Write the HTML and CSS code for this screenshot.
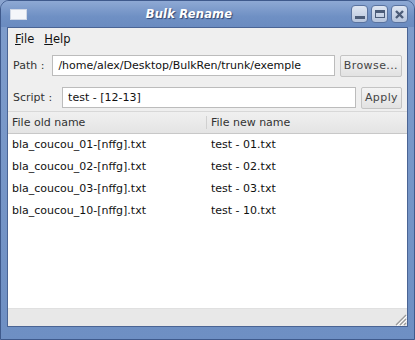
FILE: index.html
```html
<!DOCTYPE html>
<html lang="en">
<head>
    <meta charset="UTF-8">
    <title>Bulk Rename</title>
    <link rel="stylesheet" href="styles.css">
</head>
<body>
    <div class="window">
        <!-- title bar -->
        <div class="titlebar">
            <span class="app-icon"></span>
            <span class="title">Bulk Rename</span>
            <div class="wm-buttons">
                <span class="wm-btn"><span class="ico-min"></span></span>
                <span class="wm-btn"><span class="ico-max"></span></span>
                <span class="wm-btn">
                    <svg width="11" height="11" viewBox="0 0 11 11"><path d="M2 2 L9 9 M9 2 L2 9" stroke="#4c5c78" stroke-width="2.4"/></svg>
                </span>
            </div>
        </div>

        <div class="client">
            <div class="menubar">
                <span class="menu"><u>F</u>ile</span>
                <span class="menu"><u>H</u>elp</span>
            </div>

            <div class="form-row">
                <span class="label">Path :</span>
                <span class="input path-input">/home/alex/Desktop/BulkRen/trunk/exemple</span>
                <span class="button browse">Browse...</span>
            </div>
            <div class="form-row">
                <span class="label script-label">Script :</span>
                <span class="input script-input">test - [12-13]</span>
                <span class="button apply">Apply</span>
            </div>

            <div class="table">
                <div class="thead">
                    <span class="th col-old">File old name</span>
                    <span class="th col-new">File new name</span>
                </div>
                <div class="tbody">
                    <div class="tr"><span class="col-old">bla_coucou_01-[nffg].txt</span><span class="col-new">test - 01.txt</span></div>
                    <div class="tr"><span class="col-old">bla_coucou_02-[nffg].txt</span><span class="col-new">test - 02.txt</span></div>
                    <div class="tr"><span class="col-old">bla_coucou_03-[nffg].txt</span><span class="col-new">test - 03.txt</span></div>
                    <div class="tr"><span class="col-old">bla_coucou_10-[nffg].txt</span><span class="col-new">test - 10.txt</span></div>
                </div>
            </div>

            <div class="statusbar">
                <svg class="grip" width="14" height="14" viewBox="0 0 14 14">
                    <path d="M13 3 L3 13 M13 7 L7 13 M13 11 L11 13" stroke="#9a9a9a" stroke-width="1.2"/>
                    <path d="M14 4 L4 14 M14 8 L8 14" stroke="#ffffff" stroke-width="1"/>
                </svg>
            </div>
        </div>
    </div>
</body>
</html>
```

FILE: styles.css
```css
/* --- base --- */
body {
    margin: 0;
    width: 415px;
    height: 340px;
    overflow: hidden;
    background: #8aa4cf;
    font-family: 'DejaVu Sans', sans-serif;
    font-size: 11px;
    color: #111;
}

.window {
    height: 340px;
    display: flex;
    flex-direction: column;
    background: linear-gradient(#7f9dcc, #6e8fc3);
    border: 1px solid #3f5a8c;
    border-radius: 9px 9px 0 0;
    box-sizing: border-box;
}

/* --- title bar --- */
.titlebar {
    height: 26px;
    display: flex;
    align-items: center;
    background: linear-gradient(#8ea9d4, #6f90c4 60%, #6a8bc0);
    border-radius: 8px 8px 0 0;
    padding: 0 6px;
}

.app-icon {
    width: 17px;
    height: 11px;
    margin-left: 3px;
    background: #f4f6fa;
    border: 1px solid #d0d8e6;
    box-sizing: border-box;
}

.title {
    flex: 1;
    text-align: center;
    color: #fff;
    font-weight: bold;
    font-style: italic;
    font-size: 11.5px;
    letter-spacing: 0.2px;
    text-shadow: 1px 1px 1px #2e4470;
}

.wm-buttons {
    display: flex;
    gap: 3px;
}

.wm-btn {
    width: 17px;
    height: 18px;
    display: flex;
    align-items: center;
    justify-content: center;
    background: linear-gradient(#dfe6f2, #b6c4dc);
    border: 1px solid #5a73a0;
    border-radius: 4px;
    box-sizing: border-box;
}

.ico-min {
    width: 10px;
    height: 3px;
    margin-top: 7px;
    background: #4c5c78;
}

.ico-max {
    width: 10px;
    height: 8px;
    border: 1px solid #4c5c78;
    border-top-width: 3px;
    box-sizing: border-box;
}

/* --- client area --- */
.client {
    flex: 1;
    display: flex;
    flex-direction: column;
    margin: 0 6px 12px 6px;
    background: #efefef;
    border: 1px solid #4a6494;
}

.menubar {
    height: 21px;
    display: flex;
    align-items: center;
    gap: 10px;
    padding: 0 7px;
    font-size: 11.5px;
}

.form-row {
    display: flex;
    align-items: center;
    padding: 0 5px 0 5px;
    margin-top: 5px;
    height: 23px;
}

.form-row + .form-row {
    margin-top: 9px;
}

.label {
    color: #333;
    margin-right: 8px;
    white-space: nowrap;
}

.script-label {
    margin-right: 10px;
}

.input {
    flex: 1;
    height: 21px;
    line-height: 19px;
    padding: 0 5px;
    background: #fff;
    border: 1px solid #bcbcbc;
    box-sizing: border-box;
    white-space: nowrap;
    overflow: hidden;
}

.button {
    margin-left: 5px;
    height: 22px;
    line-height: 20px;
    padding: 0 3px;
    background: linear-gradient(#f4f4f4, #e2e2e2);
    border: 1px solid #c4c4c4;
    border-radius: 2px;
    box-sizing: border-box;
    color: #444;
    letter-spacing: 0.4px;
}

/* --- file table --- */
.table {
    flex: 1;
    display: flex;
    flex-direction: column;
    margin-top: 2px;
    background: #fff;
}

.thead {
    height: 21px;
    display: flex;
    align-items: center;
    background: linear-gradient(#f0f0f0, #e4e4e4);
    border-top: 1px solid #d8d8d8;
    border-bottom: 1px solid #c8c8c8;
    color: #333;
}

.th.col-old {
    border-right: 1px solid #d0d0d0;
}

.col-old {
    width: 199px;
    padding-left: 4px;
    box-sizing: border-box;
}

.col-new {
    padding-left: 4px;
}

.tbody {
    flex: 1;
    margin-top: -1px;
}

.tr {
    height: 22px;
    display: flex;
    align-items: center;
}

.statusbar {
    height: 17px;
    display: flex;
    justify-content: flex-end;
    align-items: flex-end;
    background: #e8e8e8;
    border-top: 1px solid #e0e0e0;
}

.grip {
    display: block;
}
```
